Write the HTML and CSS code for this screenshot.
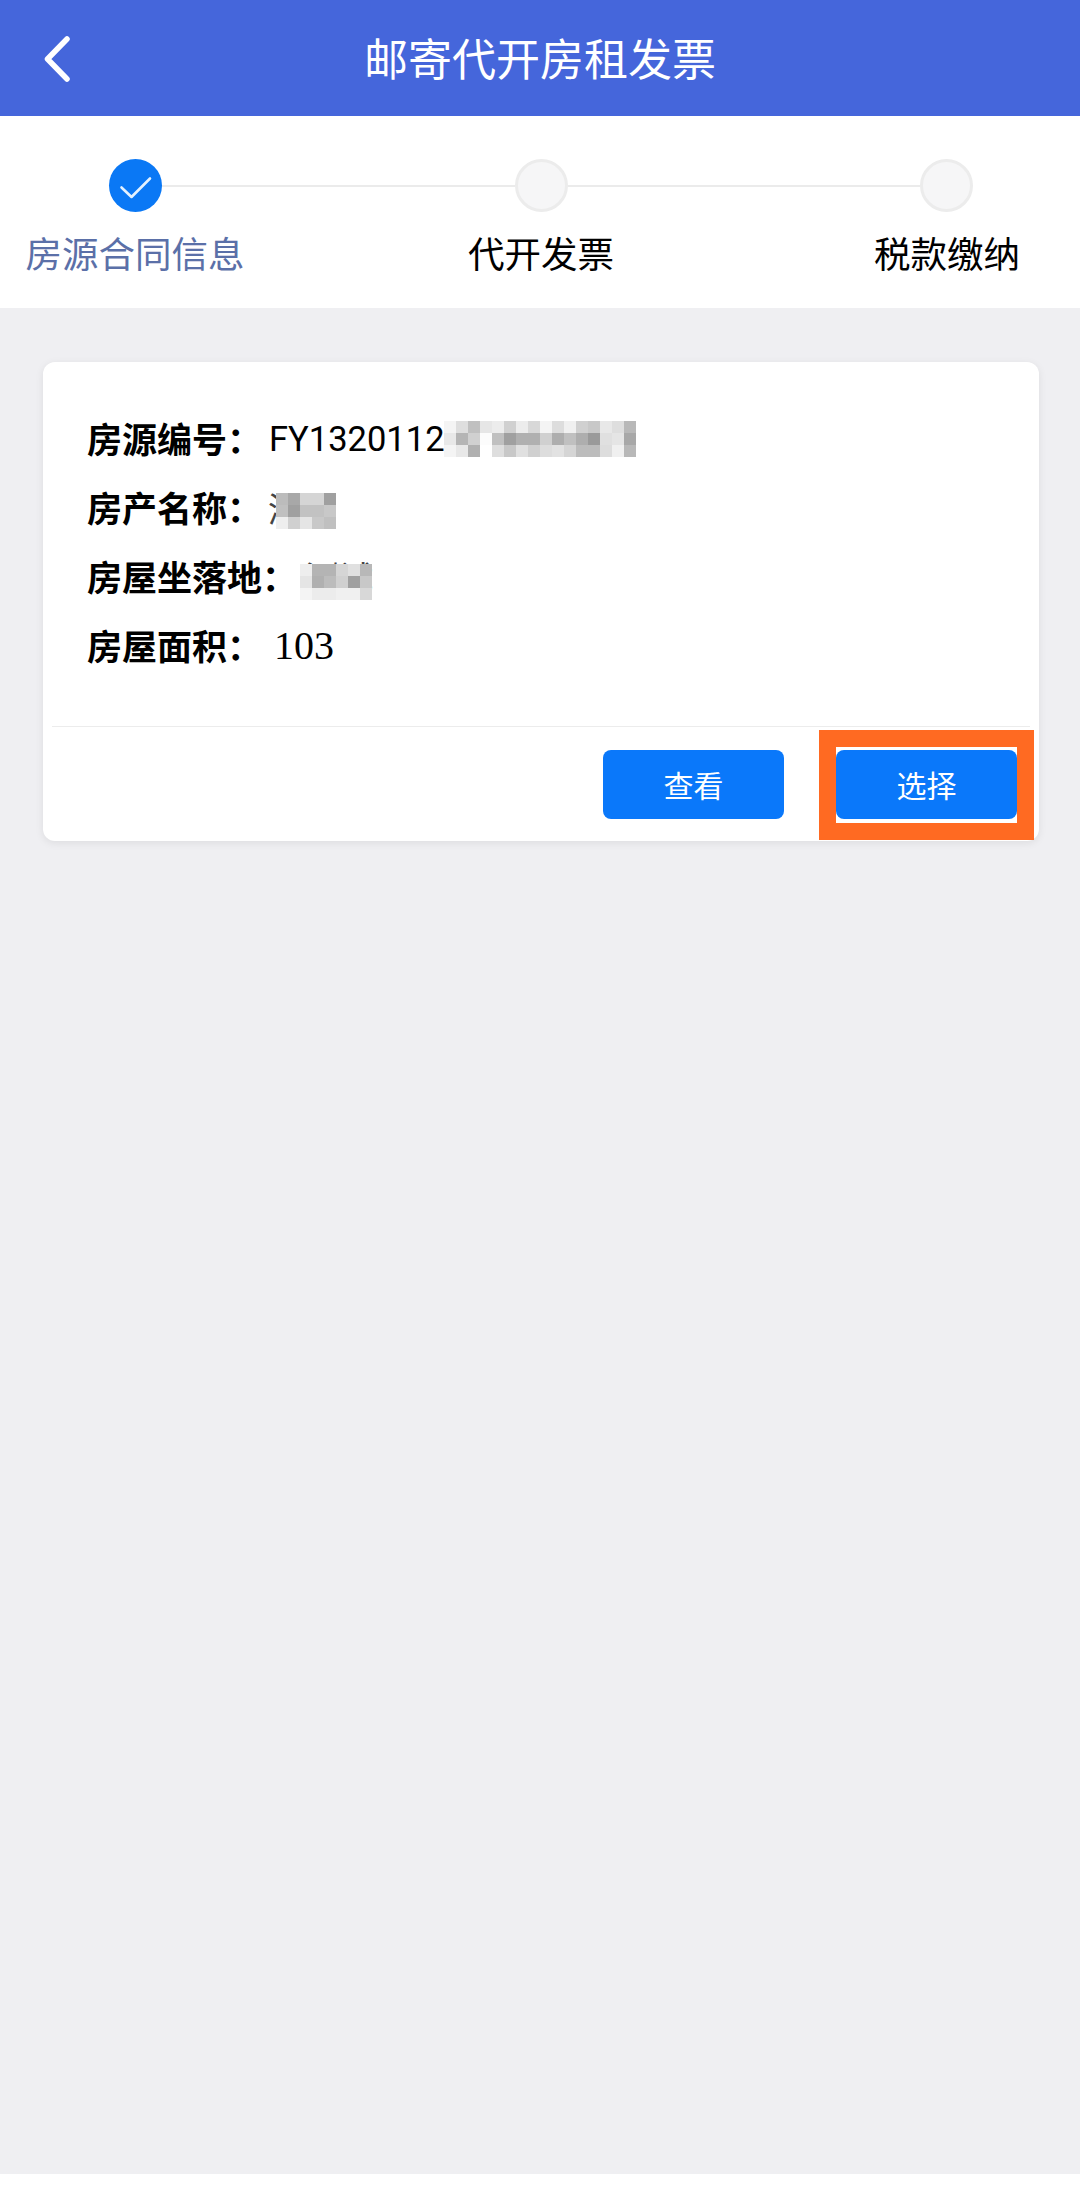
FILE: index.html
```html
<!DOCTYPE html>
<html lang="zh-CN">
<head>
<meta charset="utf-8">
<title>邮寄代开房租发票</title>
<link rel="stylesheet" href="styles.css">
</head>
<body>
<div class="page">
  <header class="topbar">
    <button class="back" aria-label="返回">
      <svg width="26" height="46" viewBox="0 0 26 46"><path d="M23 3 L3.500 23 L23 43" fill="none" stroke="#fff" stroke-width="5.500" stroke-linecap="round" stroke-linejoin="round"/></svg>
    </button>
    <h1 class="title">邮寄代开房租发票</h1>
  </header>

  <section class="steps">
    <div class="track">
      <span class="dot dot-done">
        <svg width="53" height="53" viewBox="0 0 53 53"><path d="M12.500 28.500 L22.500 38 L41 19.500" fill="none" stroke="#e3f1ff" stroke-width="2.600" stroke-linecap="round" stroke-linejoin="round"/></svg>
      </span>
      <span class="rail"></span>
      <span class="dot"></span>
      <span class="rail"></span>
      <span class="dot"></span>
    </div>
    <div class="labels">
      <span class="label label-active">房源合同信息</span>
      <span class="label">代开发票</span>
      <span class="label">税款缴纳</span>
    </div>
  </section>

  <main class="content">
    <article class="card">
      <div class="info">
        <div class="row">
          <span class="key">房源编号：</span>
          <span class="val val-sans">FY13201120000000
            <svg class="mosaic mosaic-a" width="192" height="36" viewBox="0 0 192 36" shape-rendering="crispEdges">
              <g>
                <rect x="0" y="0" width="12" height="12" fill="#f4f4f4"/><rect x="12" y="0" width="12" height="12" fill="#dedede"/><rect x="24" y="0" width="12" height="12" fill="#c0c0c0"/><rect x="36" y="0" width="12" height="12" fill="#e6e6e6"/><rect x="48" y="0" width="12" height="12" fill="#ececec"/><rect x="60" y="0" width="12" height="12" fill="#d0d0d0"/><rect x="72" y="0" width="12" height="12" fill="#ececec"/><rect x="84" y="0" width="12" height="12" fill="#d8d8d8"/><rect x="96" y="0" width="12" height="12" fill="#f4f4f4"/><rect x="108" y="0" width="12" height="12" fill="#dddddd"/><rect x="120" y="0" width="12" height="12" fill="#f0f0f0"/><rect x="132" y="0" width="12" height="12" fill="#d0d0d0"/><rect x="144" y="0" width="12" height="12" fill="#c8c8c8"/><rect x="156" y="0" width="12" height="12" fill="#e8e8e8"/><rect x="168" y="0" width="12" height="12" fill="#dedede"/><rect x="180" y="0" width="12" height="12" fill="#b8b8b8"/>
                <rect x="0" y="12" width="12" height="12" fill="#e8e8e8"/><rect x="12" y="12" width="12" height="12" fill="#b5b5b5"/><rect x="24" y="12" width="12" height="12" fill="#d0d0d0"/><rect x="36" y="12" width="12" height="12" fill="#fcfcfc"/><rect x="48" y="12" width="12" height="12" fill="#c0c0c0"/><rect x="60" y="12" width="12" height="12" fill="#a0a0a0"/><rect x="72" y="12" width="12" height="12" fill="#b0b0b0"/><rect x="84" y="12" width="12" height="12" fill="#b0b0b0"/><rect x="96" y="12" width="12" height="12" fill="#d0d0d0"/><rect x="108" y="12" width="12" height="12" fill="#aeaeae"/><rect x="120" y="12" width="12" height="12" fill="#c0c0c0"/><rect x="132" y="12" width="12" height="12" fill="#aeaeae"/><rect x="144" y="12" width="12" height="12" fill="#9a9a9a"/><rect x="156" y="12" width="12" height="12" fill="#e0e0e0"/><rect x="168" y="12" width="12" height="12" fill="#e5e5e5"/><rect x="180" y="12" width="12" height="12" fill="#a8a8a8"/>
                <rect x="0" y="24" width="12" height="12" fill="#f4f4f4"/><rect x="12" y="24" width="12" height="12" fill="#e8e8e8"/><rect x="24" y="24" width="12" height="12" fill="#b0b0b0"/><rect x="36" y="24" width="12" height="12" fill="#ffffff"/><rect x="48" y="24" width="12" height="12" fill="#dedede"/><rect x="60" y="24" width="12" height="12" fill="#c8c8c8"/><rect x="72" y="24" width="12" height="12" fill="#e0e0e0"/><rect x="84" y="24" width="12" height="12" fill="#d0d0d0"/><rect x="96" y="24" width="12" height="12" fill="#dddddd"/><rect x="108" y="24" width="12" height="12" fill="#e2e2e2"/><rect x="120" y="24" width="12" height="12" fill="#d5d5d5"/><rect x="132" y="24" width="12" height="12" fill="#bcbcbc"/><rect x="144" y="24" width="12" height="12" fill="#bcbcbc"/><rect x="156" y="24" width="12" height="12" fill="#dddddd"/><rect x="168" y="24" width="12" height="12" fill="#f0f0f0"/><rect x="180" y="24" width="12" height="12" fill="#b8b8b8"/>
              </g>
            </svg>
          </span>
        </div>
        <div class="row">
          <span class="key">房产名称：</span>
          <span class="val val-cjk val-name">测试
            <svg class="mosaic mosaic-b" width="60" height="36" viewBox="0 0 60 36" shape-rendering="crispEdges">
              <rect x="0" y="0" width="12" height="12" fill="#bcbcbc"/><rect x="12" y="0" width="12" height="12" fill="#a8a8a8"/><rect x="24" y="0" width="24" height="12" fill="#d5d5d5"/><rect x="48" y="0" width="12" height="12" fill="#a0a0a0"/>
              <rect x="0" y="12" width="12" height="12" fill="#c0c0c0"/><rect x="12" y="12" width="12" height="12" fill="#a0a0a0"/><rect x="24" y="12" width="24" height="12" fill="#c2c2c2"/><rect x="48" y="12" width="12" height="12" fill="#c8c8c8"/>
              <rect x="0" y="24" width="12" height="12" fill="#eeeeee"/><rect x="12" y="24" width="12" height="12" fill="#d0d0d0"/><rect x="24" y="24" width="12" height="12" fill="#e5e5e5"/><rect x="36" y="24" width="12" height="12" fill="#c8c8c8"/><rect x="48" y="24" width="12" height="12" fill="#c0c0c0"/>
            </svg>
          </span>
        </div>
        <div class="row">
          <span class="key">房屋坐落地：</span>
          <span class="val val-cjk val-addr">测试
            <svg class="mosaic mosaic-c" width="72" height="36" viewBox="0 0 72 36" shape-rendering="crispEdges">
              <rect x="0" y="0" width="12" height="12" fill="#eeeeee"/><rect x="12" y="0" width="24" height="12" fill="#b4b4b4"/><rect x="36" y="0" width="12" height="12" fill="#d5d5d5"/><rect x="48" y="0" width="12" height="12" fill="#e0e0e0"/><rect x="60" y="0" width="12" height="12" fill="#b8b8b8"/>
              <rect x="0" y="12" width="12" height="12" fill="#e5e5e5"/><rect x="12" y="12" width="12" height="12" fill="#b0b0b0"/><rect x="24" y="12" width="12" height="12" fill="#bcbcbc"/><rect x="36" y="12" width="12" height="12" fill="#d0d0d0"/><rect x="48" y="12" width="12" height="12" fill="#a0a0a0"/><rect x="60" y="12" width="12" height="12" fill="#c8c8c8"/>
              <rect x="0" y="24" width="12" height="12" fill="#f4f4f4"/><rect x="12" y="24" width="24" height="12" fill="#ececec"/><rect x="36" y="24" width="24" height="12" fill="#f0f0f0"/><rect x="60" y="24" width="12" height="12" fill="#d8d8d8"/>
            </svg>
          </span>
        </div>
        <div class="row">
          <span class="key">房屋面积：</span>
          <span class="val val-serif">103</span>
        </div>
      </div>
      <div class="actions">
        <button class="btn">查看</button>
        <div class="btn-wrap">
          <button class="btn">选择</button>
          <span class="frame"></span>
        </div>
      </div>
    </article>
  </main>

  <div class="foot"></div>
</div>
</body>
</html>
```

FILE: styles.css
```css
* { box-sizing: border-box; }

html, body {
  margin: 0;
  padding: 0;
}

body {
  font-family: "Noto Sans CJK SC", "Noto Sans", sans-serif;
  background: #fff;
  color: #000;
}

.page {
  width: 1080px;
  height: 2200px;
  display: flex;
  flex-direction: column;
  overflow: hidden;
}

.topbar {
  height: 116px;
  flex: none;
  background: #4566db;
  display: flex;
  align-items: center;
  justify-content: center;
  position: relative;
}

.back {
  position: absolute;
  left: 44px;
  top: 36px;
  width: 26px;
  height: 46px;
  padding: 0;
  border: 0;
  background: none;
  line-height: 0;
}

.title {
  margin: 0;
  font-size: 44px;
  line-height: 60px;
  font-weight: 400;
  color: #fff;
  position: relative;
  top: -1px;
}

.steps {
  flex: none;
  height: 192px;
  background: #fff;
  padding-top: 43px;
}

.track {
  display: flex;
  align-items: center;
  margin: 0 107px 0 109px;
}

.dot {
  width: 53px;
  height: 53px;
  flex: none;
  border-radius: 50%;
  background: #f6f6f7;
  border: 3px solid #ececec;
}

.dot-done {
  background: #0a78f5;
  border: 0;
  line-height: 0;
}

.rail {
  flex: 1;
  height: 2px;
  background: #ebebeb;
}

.labels {
  display: flex;
  justify-content: space-between;
  padding: 0 22px 0 24px;
  margin-top: 16px;
}

.label {
  width: 222px;
  text-align: center;
  font-size: 36.500px;
  line-height: 50px;
  color: #000;
  white-space: nowrap;
}

.label-active {
  color: #5b70a8;
}

.content {
  flex: 1;
  background: #efeff2;
  padding: 54px 41px 0 43px;
}

.card {
  height: 479px;
  background: #fff;
  border-radius: 12px;
  box-shadow: 0 2px 8px rgba(0, 0, 0, 0.08);
  display: flex;
  flex-direction: column;
}

.info {
  height: 365px;
  padding: 42px 0 0 35px;
  margin: 0 9px;
  border-bottom: 1px solid #ececec;
}

.row {
  height: 69px;
  display: flex;
  align-items: center;
}

.key {
  font-size: 35px;
  font-weight: 700;
  color: #000;
  white-space: nowrap;
  margin-bottom: 3px;
}

.val {
  position: relative;
  white-space: nowrap;
  display: inline-block;
}

.val-sans {
  font-family: Roboto, "Liberation Sans", sans-serif;
  font-size: 34.500px;
  line-height: 46px;
  margin-left: 7px;
}

.val-cjk {
  font-size: 34px;
  line-height: 46px;
  color: #444;
}

.val-name {
  margin-left: 6px;
}

.val-addr {
  margin-left: 8px;
}

.val-serif {
  font-family: "Liberation Serif", serif;
  font-size: 40px;
  line-height: 46px;
  margin-left: 12px;
}

.mosaic {
  position: absolute;
  display: block;
}

.mosaic-a {
  left: 175px;
  top: 5px;
}

.mosaic-b {
  left: 8px;
  top: 8px;
}

.mosaic-c {
  left: -5px;
  top: 10px;
}

.actions {
  flex: 1;
  display: flex;
  justify-content: flex-end;
  align-items: flex-start;
  gap: 52px;
  padding: 23px 22px 0 0;
}

.btn-wrap {
  position: relative;
  line-height: 0;
}

.btn {
  width: 181px;
  height: 69px;
  padding: 0;
  border: 0;
  border-radius: 8px;
  background: #0a78fa;
  color: #fff;
  font-family: inherit;
  font-size: 30px;
  line-height: 69px;
}

.frame {
  position: absolute;
  left: -17px;
  right: -17px;
  top: -20px;
  bottom: -21px;
  border: 17px solid #ff6a22;
}

.foot {
  flex: none;
  height: 26px;
  background: #fff;
}
```
